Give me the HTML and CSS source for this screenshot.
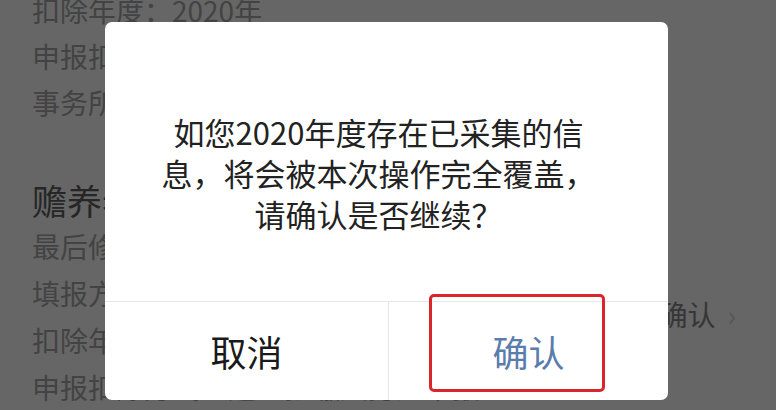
FILE: index.html
```html
<!DOCTYPE html>
<html lang="zh-CN">
<head>
    <meta charset="UTF-8">
    <meta name="viewport" content="width=device-width, initial-scale=1.0">
    <title>专项附加扣除</title>
    <link rel="stylesheet" href="styles.css">
</head>
<body>
    <div class="page">
        <div class="group group-top">
            <div class="row">扣除年度：2020年</div>
            <div class="row">申报扣除方式：通过扣缴义务人申报</div>
            <div class="row">事务所名称：某某会计师事务所</div>
        </div>
        <h2 class="section-title">赡养老人</h2>
        <div class="group">
            <div class="row">最后修改时间：2020-03-12</div>
            <div class="row-pair">
                <div>
                    <div class="row">填报方式：扣缴义务人</div>
                    <div class="row">扣除年度：2020年</div>
                </div>
                <div class="action">确认<span class="chev">›</span></div>
            </div>
            <div class="row">申报扣除方式：通过扣缴义务人申报</div>
        </div>
    </div>

    <div class="mask">
        <div class="dialog">
            <p class="msg">如您2020年度存在已采集的信<br>息，将会被本次操作完全覆盖，<br>请确认是否继续？</p>
            <div class="actions">
                <button class="btn">取消</button>
                <button class="btn btn-ok">确认</button>
            </div>
            <span class="highlight"></span>
        </div>
    </div>
</body>
</html>
```

FILE: styles.css
```css
body {
    margin: 0;
    padding: 0;
    background-color: #fff;
    font-family: "Noto Sans CJK SC", "Noto Sans", sans-serif;
    overflow: hidden;
    height: 410px;
}
.page {
    padding: 0 40px 0 32px;
}
.group-top {
    margin-top: -13px;
}
.row {
    font-size: 28px;
    line-height: 46px;
    height: 46px;
    color: #a8a8a8;
    white-space: nowrap;
}
.group + .section-title + .group .row {
    height: 47px;
    line-height: 47px;
}
.section-title {
    margin: 52px 0 0 0;
    font-size: 35px;
    font-weight: 400;
    line-height: 46px;
    height: 46px;
    color: #606060;
}
.row-pair {
    display: flex;
    justify-content: space-between;
    align-items: center;
}
.action {
    font-size: 28px;
    color: #888;
    padding-bottom: 6px;
}
.action .chev {
    color: #d8d8d8;
    margin-left: 12px;
}
.mask {
    position: fixed;
    top: 0;
    left: 0;
    right: 0;
    bottom: 0;
    background-color: rgba(0, 0, 0, 0.6);
    display: flex;
    align-items: flex-start;
    padding: 22px 0 0 105px;
}
.dialog {
    position: relative;
    width: 563px;
    height: 378px;
    background: #fff;
    border-radius: 7px;
    display: flex;
    flex-direction: column;
}
.msg {
    flex: 1;
    margin: 0;
    padding: 89px 36px 0 20px;
    font-size: 31px;
    line-height: 41px;
    color: #222;
    text-align: center;
    white-space: nowrap;
}
.actions {
    height: 98px;
    display: grid;
    grid-template-columns: 283px 1fr;
    border-top: 1px solid #e6e6e6;
}
.btn {
    background: none;
    border: none;
    padding: 0;
    font-family: inherit;
    font-size: 36px;
    color: #1a1a1a;
    cursor: pointer;
}
.btn-ok {
    border-left: 1px solid #e6e6e6;
    color: #5a7dab;
}
.highlight {
    position: absolute;
    left: 324px;
    top: 272px;
    width: 170px;
    height: 92px;
    border: 3px solid #d9262b;
    border-radius: 5px;
}
```
